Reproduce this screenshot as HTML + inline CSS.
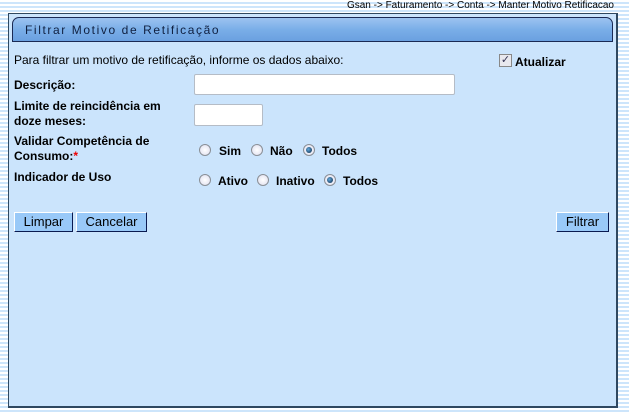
<!DOCTYPE html>
<html><head><meta charset="utf-8"><style>
*{margin:0;padding:0;box-sizing:border-box}
body{width:629px;height:414px;overflow:hidden;font-family:"Liberation Sans",Arial,sans-serif;font-size:12px;color:#000;
background:repeating-linear-gradient(to bottom,#fff 0,#fff 2px,#cde5fb 2px,#cde5fb 4px);position:relative}
.crumb{position:absolute;right:15px;top:0;font-size:10px;color:#000}
.panel{position:absolute;left:8px;top:13px;width:610px;height:395px;background:#cbe4fc;border:1px solid #2f4860;border-right:2px solid #2f4860;border-bottom:2px solid #2f4860}
.tab{position:absolute;left:3px;top:3px;width:601px;height:25px;border:1px solid #1a2a55;border-radius:7px 7px 0 0;
background:linear-gradient(#9cc3f0,#7aaee8 50%,#6aa0e0);color:#102040;font-size:12px;letter-spacing:1.6px;padding:5px 0 0 12px}
.a{position:absolute;white-space:nowrap}
b{font-weight:bold}
.in{position:absolute;background:#fff;border:1px solid #b5bcc6;border-radius:2px}
.r{position:absolute;width:12px;height:12px;border-radius:50%;border:1px solid #8a8f96;background:radial-gradient(#fff,#dde)}
.r.on::after{content:"";position:absolute;left:2px;top:2px;width:6px;height:6px;border-radius:50%;background:radial-gradient(circle at 40% 40%,#6ad,#024)}
.btn{position:absolute;height:20px;background:#99c9f8;border:1px solid;border-color:#fff #0a1a50 #0a1a50 #fff;font-size:13px;text-align:center;line-height:18px}
.cb{position:absolute;left:499px;top:54px;width:13px;height:13px;border:1px solid #888;background:#e8e8ee;font-size:11px;line-height:11px;text-align:center;color:#335}
</style></head><body>
<div class="crumb">Gsan -&gt; Faturamento -&gt; Conta -&gt; Manter Motivo Retificacao</div>
<div class="panel"><div class="tab">Filtrar Motivo de Retificação</div></div>
<div class="a" style="left:14px;top:53px">Para filtrar um motivo de retificação, informe os dados abaixo:</div>
<div class="cb">✓</div><div class="a" style="left:515px;top:55px"><b>Atualizar</b></div>
<div class="a" style="left:14px;top:78px"><b>Descrição:</b></div>
<div class="in" style="left:194px;top:74px;width:261px;height:21px"></div>
<div class="a" style="left:14px;top:99px;line-height:15px"><b>Limite de reincidência em<br>doze meses:</b></div>
<div class="in" style="left:194px;top:104px;width:69px;height:22px"></div>
<div class="a" style="left:14px;top:134px;line-height:15px"><b>Validar Competência de<br>Consumo:<span style="color:#e00">*</span></b></div>
<div class="r" style="left:199px;top:144px"></div><div class="a" style="left:219px;top:144px"><b>Sim</b></div>
<div class="r" style="left:251px;top:144px"></div><div class="a" style="left:270px;top:144px"><b>Não</b></div>
<div class="r on" style="left:303px;top:144px"></div><div class="a" style="left:322px;top:144px"><b>Todos</b></div>
<div class="a" style="left:14px;top:170px"><b>Indicador de Uso</b></div>
<div class="r" style="left:199px;top:174px"></div><div class="a" style="left:218px;top:174px"><b>Ativo</b></div>
<div class="r" style="left:257px;top:174px"></div><div class="a" style="left:276px;top:174px"><b>Inativo</b></div>
<div class="r on" style="left:324px;top:174px"></div><div class="a" style="left:343px;top:174px"><b>Todos</b></div>
<div class="btn" style="left:14px;top:212px;width:59px">Limpar</div>
<div class="btn" style="left:76px;top:212px;width:71px">Cancelar</div>
<div class="btn" style="left:556px;top:212px;width:53px">Filtrar</div>
</body></html>
